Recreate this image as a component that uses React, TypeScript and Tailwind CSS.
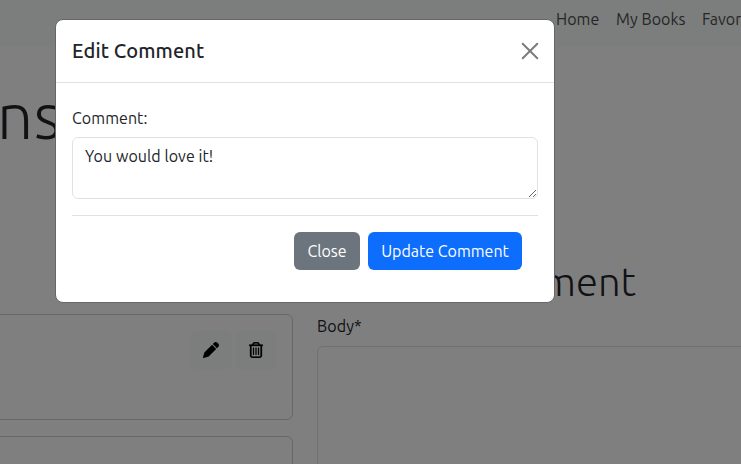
import React from "react";
import { FaPen, FaRegTrashCan } from "react-icons/fa6";

function NavBar() {
  return (
    <nav className="flex h-[47px] w-[900px] gap-4 bg-[#f7fcfa] pt-[7px] pl-[556px] text-base leading-6 text-[#4d4d4e]">
      <span className="w-11 whitespace-nowrap tracking-[0.05px]">Home</span>
      <span className="w-[70px] whitespace-nowrap tracking-[0.05px]">My Books</span>
      <span className="whitespace-nowrap">Favorites</span>
    </nav>
  );
}

function CommentCard({ actions }: { actions?: boolean }) {
  return (
    <div className="-ml-2 flex h-[106px] w-[301px] shrink-0 items-start justify-end gap-1 rounded-md border border-[#d0d0d0] px-4 pt-4">
      {actions && (
        <>
          <button className="flex h-[38px] w-[42px] items-center justify-center rounded-md bg-[#f7fcfa] text-black">
            <FaPen size={16} />
          </button>
          <button className="flex h-[38px] w-10 items-center justify-center rounded-md bg-[#f7fcfa] text-black">
            <FaRegTrashCan size={16} stroke="currentColor" strokeWidth={8} />
          </button>
        </>
      )}
    </div>
  );
}

function BookPage() {
  return (
    <div className="h-[464px] overflow-hidden bg-white">
      <NavBar />
      <h1 className="-ml-[3px] h-[207px] pt-[23px] text-[64px] leading-[90px] font-light tracking-[0.5px]">ns</h1>
      <div className="flex gap-6">
        <div className="flex w-[293px] flex-col gap-4 pt-[60px]">
          <CommentCard actions />
          <CommentCard />
        </div>
        <div className="w-[600px] shrink-0">
          <h2 className="h-[60px] w-[319px] pt-[4px] text-right text-[40px] leading-[48px] font-light whitespace-nowrap">Leave a comment</h2>
          <label className="block h-8 leading-6 tracking-[0.1px]">Body*</label>
          <div className="h-60 rounded-md border border-[#dee2e6]" />
        </div>
      </div>
    </div>
  );
}

function EditDialog() {
  return (
    <div role="dialog" className="mt-[19px] ml-[55px] h-[284px] w-[500px] rounded-lg border border-[#666] bg-white">
      <header className="flex h-[63px] items-center justify-between border-b border-[#dee2e6] px-4">
        <h5 className="text-[20px] leading-[30px] font-medium tracking-[0.12px]">Edit Comment</h5>
        <svg viewBox="0 0 16 16" className="size-4 text-[#7c7c7c]" fill="none" stroke="currentColor" strokeWidth="2" strokeLinecap="round" overflow="visible">
          <path d="M.7.7 15.3 15.3M15.3.7.7 15.3" />
        </svg>
      </header>
      <div className="px-4 pt-[23px]">
        <label className="block leading-6 tracking-[0.06px]">Comment:</label>
        <textarea
          className="mt-[7px] block h-[62px] w-full resize rounded-md border border-[#dee2e6] bg-white px-3 py-1.5 leading-6 tracking-[0.06px]"
          defaultValue="You would love it!"
        />
        <footer className="mt-4 flex justify-end gap-2 border-t border-[#dee2e6] px-4 pt-4 text-white">
          <button className="h-[38px] w-[66px] rounded-md bg-[#6c757d]">Close</button>
          <button className="h-[38px] w-[154px] rounded-md bg-[#0d6efd] whitespace-nowrap">Update Comment</button>
        </footer>
      </div>
    </div>
  );
}

export default function App() {
  return (
    <div className="relative h-[464px] w-[741px] overflow-hidden font-['Ubuntu','Noto_Sans',sans-serif] text-base text-[#212529]">
      <BookPage />
      <div className="absolute inset-0 bg-black/50" />
      <div className="absolute inset-0">
        <EditDialog />
      </div>
    </div>
  );
}
